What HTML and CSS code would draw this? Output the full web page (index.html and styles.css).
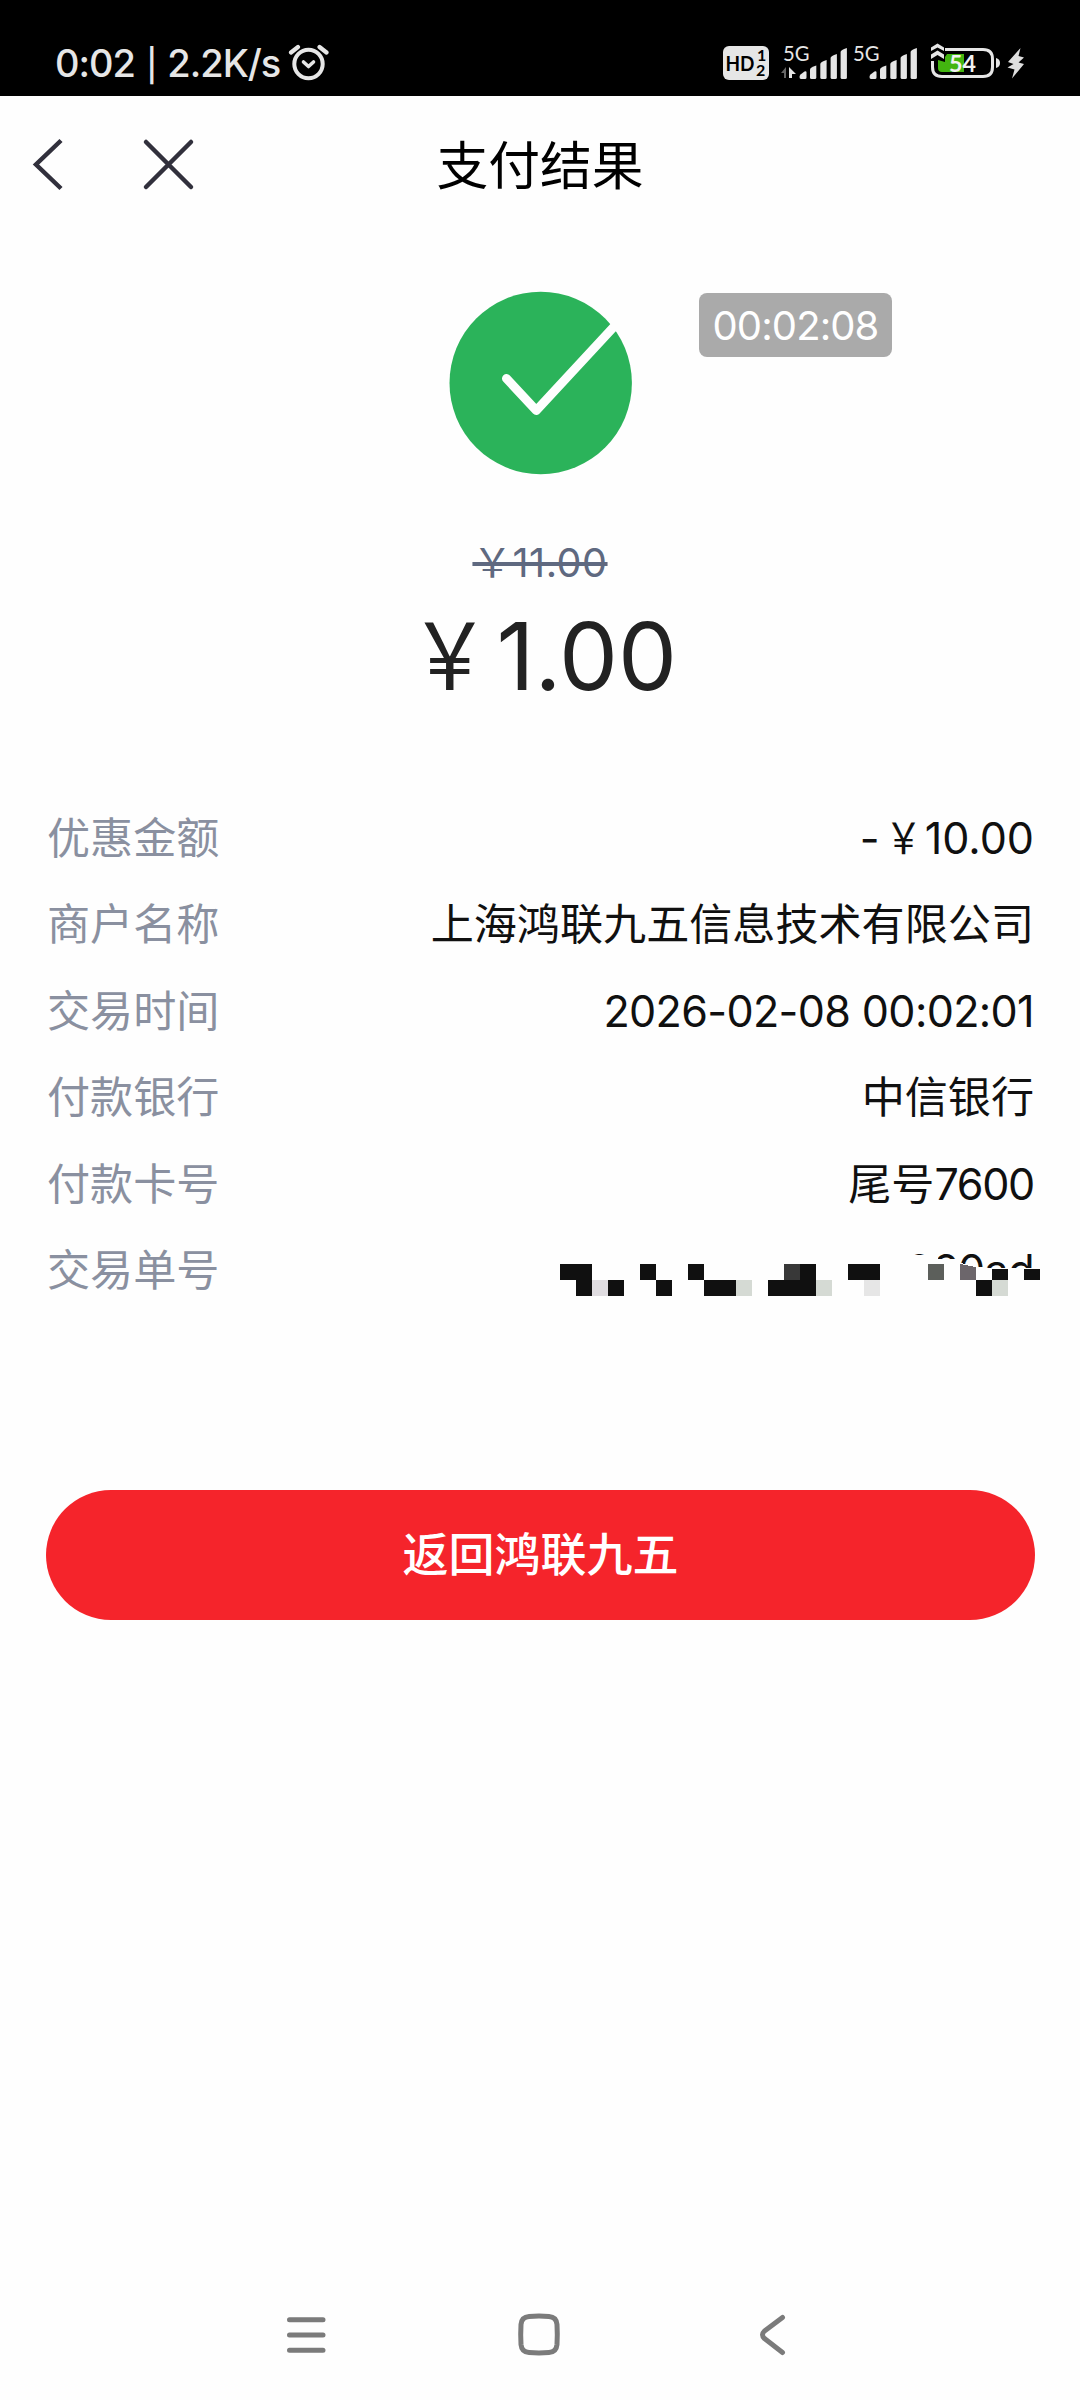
FILE: index.html
```html
<!DOCTYPE html>
<html lang="zh-CN">
<head>
<meta charset="utf-8">
<title>支付结果</title>
<link rel="stylesheet" href="styles.css">
</head>
<body>
<div class="screen">
  <div class="status-bar">
    <div class="status-left">
      <span class="clock">0:02 <span class="divider">|</span> 2.2K/s</span>
      <svg class="alarm" width="42" height="40" viewBox="287 43 42 40" fill="none" stroke="#e6e6e6" stroke-linecap="round" stroke-linejoin="round">
        <circle cx="308.5" cy="64" r="14.2" stroke-width="4"/>
        <path d="M303.500 62l5 4.500 5-4.500" stroke-width="3.6"/>
        <path d="M291 52.500l7-5.500M319.500 47l7 5.500" stroke-width="4.200"/>
      </svg>
    </div>
    <svg class="status-icons" width="310" height="44" viewBox="720 40 310 44">
      <rect x="723" y="46" width="46" height="34" rx="6" fill="#e6e6e6"/>
      <text class="hd" x="725.500" y="70.500" textLength="29" lengthAdjust="spacingAndGlyphs">HD</text>
      <text class="hd-num"><tspan x="757" y="60.500">1</tspan><tspan x="756" y="75.500">2</tspan></text>
      <text class="net" x="783" y="61" textLength="26.500" lengthAdjust="spacingAndGlyphs">5G</text>
      <path d="M781 73l5-6v11h-2v-5z" fill="#666"/>
      <path d="M789 78V67l7 7h-4v4z" fill="#e6e6e6"/>
      <g id="bars" fill="#e6e6e6">
        <path d="M799.500 77q0-1.500 1-2.500l4-3q2-1 2 1v5q0 1.500-1.500 1.500h-4q-1.500 0-1.500-2z"/>
        <path d="M810 69.500q0-2 6.300-4v12q0 1.500-1.500 1.500h-3.300q-1.500 0-1.500-1.500z"/>
        <path d="M820.300 64q0-2 6.300-4v17.500q0 1.500-1.500 1.500h-3.300q-1.500 0-1.500-1.500z"/>
        <path d="M830.600 58q0-2 6.300-4v23.500q0 1.500-1.500 1.500h-3.300q-1.500 0-1.500-1.500z"/>
        <path d="M840.600 52q0-2 6.300-4v29.500q0 1.500-1.500 1.500h-3.300q-1.500 0-1.500-1.500z"/>
      </g>
      <text class="net" x="853" y="61" textLength="26.500" lengthAdjust="spacingAndGlyphs">5G</text>
      <use href="#bars" x="70"/>
      <path d="M945 49.500H983q9.500 0 9.500 9.500v8q0 9.500-9.500 9.500H942q-9.500 0-9.500-9.500v-6" fill="none" stroke="#e6e6e6" stroke-width="3"/>
      <path d="M996 58q4 1 4 5t-4 5z" fill="#e6e6e6"/>
      <path d="M938 60l7 2v-5l2-3h17v18H942q-4 0-4-4z" fill="#43b510"/>
      <path d="M931 51v-3.500l6.500-4 6.500 4V51l-6.500-3.500zM931 59v-4.500l6.500-4 6.500 4V59l-6.500-4z" fill="#e6e6e6"/>
      <text class="level" x="949" y="72" textLength="27" lengthAdjust="spacingAndGlyphs">54</text>
      <path d="M1020.500 48L1008 62l5.500 2-6 3.500 7 2-2.500 9 12-14.500-5.500-1.500 5.500-5-5.500-1.500z" fill="#dedede"/>
    </svg>
  </div>

  <header class="title-bar">
    <svg class="nav-icons" width="180" height="60" viewBox="20 135 180 60" fill="none" stroke="#31303c" stroke-width="4.500">
      <path d="M61 140.500L36 164.500 61 188.500"/>
      <path d="M146 142l45 45M191 142l-45 45" stroke-linecap="round"/>
    </svg>
    <h1 class="title">支付结果</h1>
    <span class="timer">00:02:08</span>
  </header>

  <main class="result">
    <svg class="success" width="184" height="184" viewBox="448 291 184 184">
      <circle cx="540.700" cy="383" r="91.200" fill="#2bb35a"/>
      <path d="M506.500 378.500L536.300 410.500 622 318" fill="none" stroke="#fefefe" stroke-width="9" stroke-linecap="round" stroke-linejoin="round"/>
    </svg>
    <div class="old-price">￥11.00</div>
    <div class="price"><span class="yen">￥</span>1.00</div>

    <dl class="details">
      <div class="row"><dt>优惠金额</dt><dd><span class="minus">-</span><span class="yen">￥</span>10.00</dd></div>
      <div class="row"><dt>商户名称</dt><dd>上海鸿联九五信息技术有限公司</dd></div>
      <div class="row"><dt>交易时间</dt><dd class="time">2026-02-08 00:02:01</dd></div>
      <div class="row"><dt>付款银行</dt><dd>中信银行</dd></div>
      <div class="row"><dt>付款卡号</dt><dd>尾号<span class="digits">7600</span></dd></div>
      <div class="row"><dt>交易单号</dt><dd><span class="order">260ad</span>
        <svg class="mosaic" width="490" height="60" viewBox="550 1245 490 60" shape-rendering="crispEdges">
          <path d="M900 1255h30v1h8v3h20v3l18 5h10v1h54v36H900z" fill="#fefefe"/>
          <g fill="#101010">
            <path d="M560 1264h32v32h-16v-16h-16zM608 1280h16v16h-16zM640 1264h16v16h-16zM656 1280h16v16h-16zM688 1264h16v16h-16zM704 1280h32v16h-32zM768 1280h16v-16h32v32h-48zM848 1264h32v16h-32zM992 1269h16v11h-16zM976 1280h16v16h-16zM1024 1269h16v11h-16z"/>
          </g>
          <path d="M784 1264h16v16h-16z" fill="#383838"/>
          <path d="M592 1280h16v16h-16z" fill="#dfdce0"/>
          <path d="M736 1280h16v16h-16zM816 1280h16v16h-16zM992 1280h16v16h-16z" fill="#d5dad4"/>
          <path d="M864 1280h16v16h-16z" fill="#e6e6e6"/>
          <path d="M928 1264h16v16h-16z" fill="#5c5f5b"/>
          <path d="M960 1264l16 3v13h-16z" fill="#6c666b"/>
        </svg></dd></div>
    </dl>

    <button class="back-button" type="button">返回鸿联九五</button>
  </main>

  <nav class="system-nav">
    <svg width="1080" height="60" viewBox="0 2305 1080 60" fill="none" stroke="#7b7b7b" stroke-width="5" stroke-linecap="round" stroke-linejoin="round">
      <path d="M289.500 2319.700h33.500M289.500 2335h33.500M289.500 2350.300h33.500"/>
      <path d="M529 2316.500q10-.8 20 0 7.300.5 8 8 .6 10 0 20-.7 7.500-8 8-10 .8-20 0-7.300-.5-8-8-.6-10 0-20 .7-7.500 8-8z"/>
      <path d="M782.500 2317.500L764.500 2331q-4 3.800 0 7.600L782.500 2352.500"/>
    </svg>
  </nav>
</div>
</body>
</html>
```

FILE: styles.css
```css
* { box-sizing: border-box; }

body {
  margin: 0;
  background: #fefefe;
  font-family: Inter, "Noto Sans CJK SC", sans-serif;
  color: #101010;
}

.screen {
  width: 1080px;
  height: 2400px;
  display: flex;
  flex-direction: column;
}

.status-bar {
  height: 96px;
  padding: 30px 50px 0 55px;
  display: flex;
  justify-content: space-between;
  background: #000;
}
.status-left { display: flex; height: 66px; align-items: flex-start; }
.clock {
  width: 232px;
  font-size: 38px;
  font-weight: 500;
  line-height: 66px;
  letter-spacing: -1px;
  color: #e6e6e6;
  white-space: pre;
}
.divider { font-size: 32px; line-height: 1; margin: 0 2px; }
.alarm { margin-top: 13px; }
.status-icons { margin-top: 10px; font-family: Lato, sans-serif; }
.hd { font-size: 21px; font-weight: 700; fill: #000; }
.hd-num { font-size: 16px; font-weight: 700; fill: #000; }
.net { font-size: 21px; font-weight: 400; fill: #e6e6e6; }
.level { font-size: 23px; font-weight: 700; fill: #f2f2f2; }

.title-bar {
  position: relative;
  height: 137px;
  display: flex;
  justify-content: center;
}
.nav-icons { position: absolute; left: 20px; top: 39px; }
.title {
  margin: 0;
  font-size: 51.800px;
  font-weight: 400;
  line-height: 141px;
  color: #000;
}
.timer {
  position: absolute;
  left: 699px;
  top: 197px;
  width: 193px;
  height: 64px;
  border-radius: 8px;
  background: #aaa;
  color: #fff;
  font-size: 40px;
  line-height: 66px;
  letter-spacing: -0.900px;
  text-align: center;
}

.result {
  flex: 1;
  display: flex;
  flex-direction: column;
  align-items: center;
  padding: 58px 46px 0;
}
.success { flex: none; }
.old-price {
  margin-top: 58px;
  height: 60px;
  line-height: 60px;
  font-size: 39.600px;
  letter-spacing: 0.500px;
  color: #5f6980;
  text-decoration: line-through;
  text-decoration-thickness: 4px;
}
.price {
  margin-top: 8px;
  height: 110px;
  line-height: 110px;
  font-size: 93.600px;
  color: #222;
}
.yen { display: inline-block; transform: scaleX(0.860); }

.details {
  width: 100%;
  margin: 84px 0 0;
  padding-left: 1px;
}
.row {
  display: flex;
  justify-content: space-between;
  height: 86.400px;
  font-size: 43.100px;
  line-height: 86.400px;
}
dt { color: #8a90a0; }
dd { position: relative; margin: 0; }
.minus { margin-right: 2px; }
.time { letter-spacing: -0.650px; }
.digits { letter-spacing: -1.300px; }
.order { letter-spacing: -0.600px; }
.mosaic { position: absolute; right: -6px; top: 18px; }

.back-button {
  width: 989px;
  height: 130px;
  margin-top: 177px;
  border: 0;
  border-radius: 65px;
  background: #f5242b;
  color: #fff;
  font: 500 46px/128px Inter, "Noto Sans CJK SC", sans-serif;
  padding: 0 0 2px 1px;
}

.system-nav { height: 95px; flex: none; }
```
